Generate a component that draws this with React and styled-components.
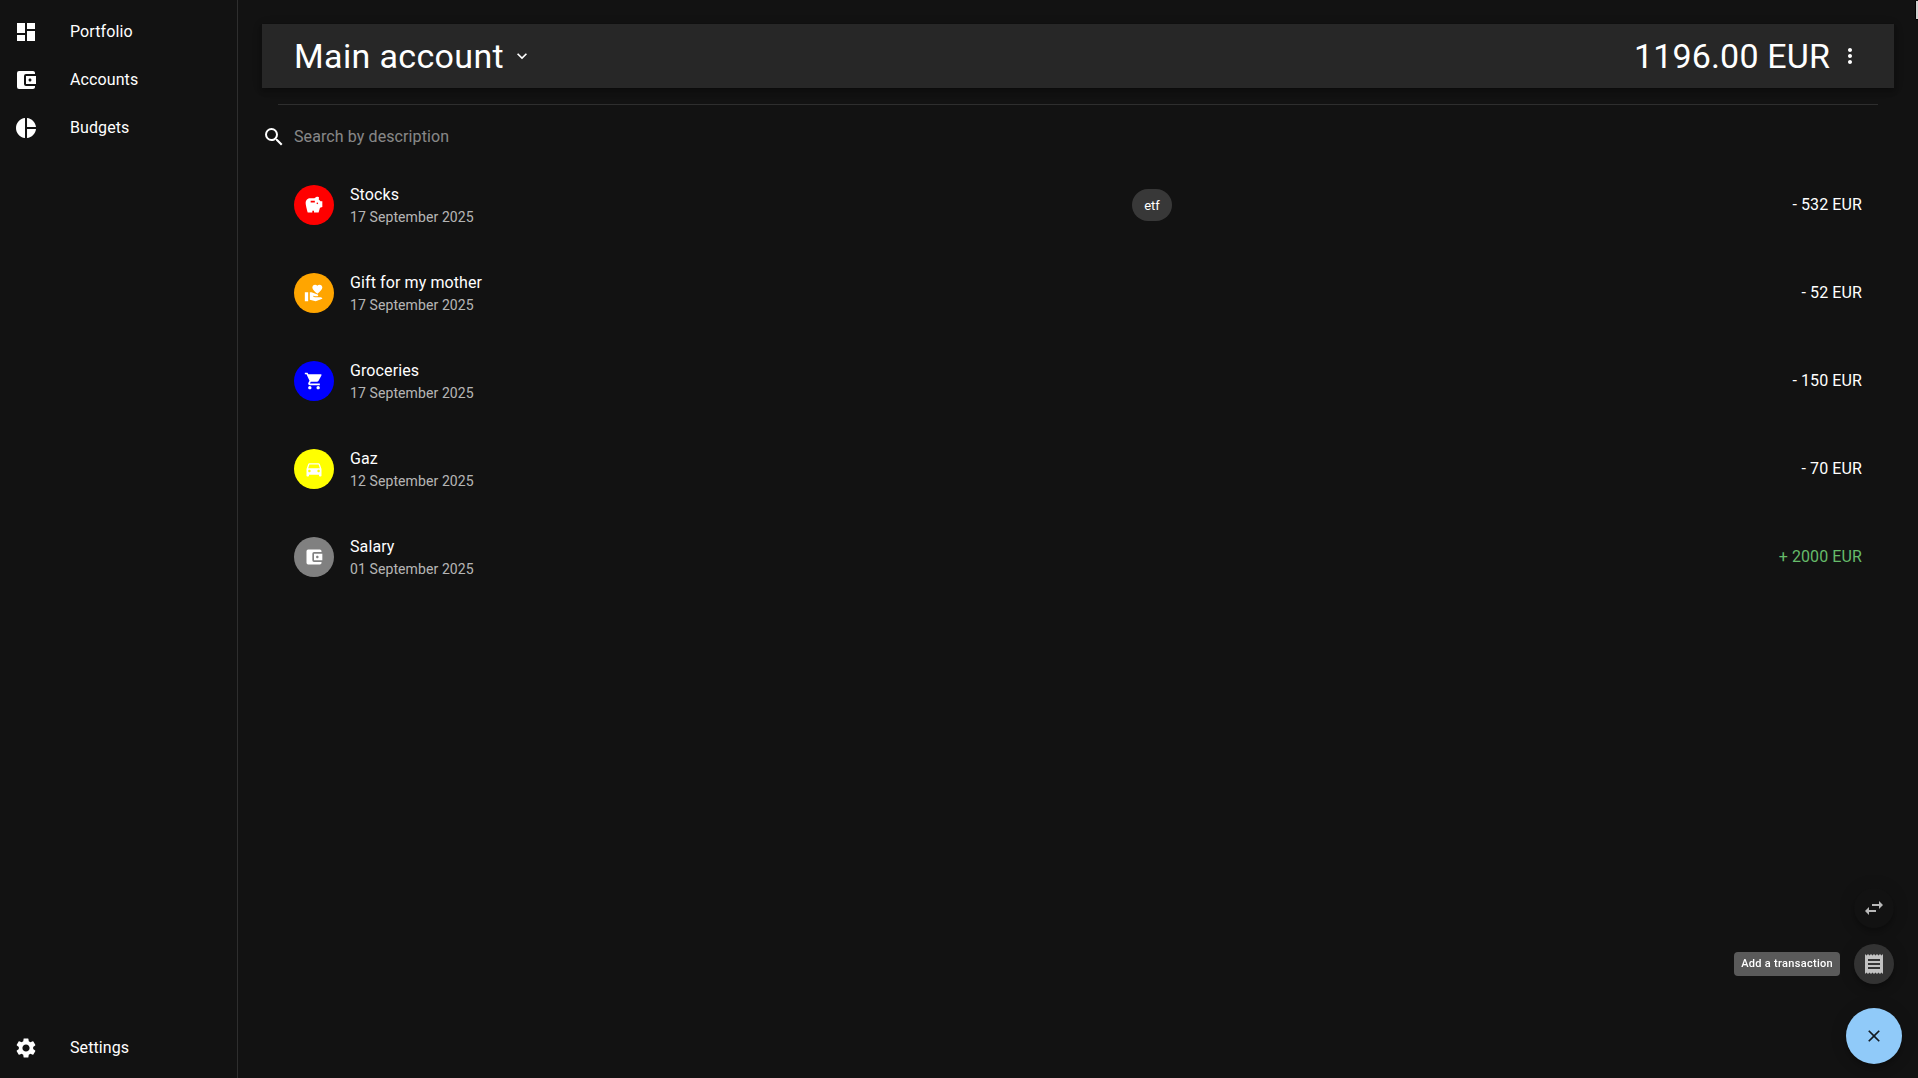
import React from 'react'
import styled, { createGlobalStyle } from 'styled-components'
import {
  MdDashboard,
  MdAccountBalanceWallet,
  MdPieChart,
  MdSettings,
  MdSearch,
  MdExpandMore,
  MdMoreVert,
  MdSavings,
  MdVolunteerActivism,
  MdShoppingCart,
  MdDirectionsCar,
  MdSwapHoriz,
  MdReceipt,
  MdClose
} from 'react-icons/md'

const GlobalStyle = createGlobalStyle`
  html, body, #root {
    margin: 0;
    height: 100%;
  }

  body {
    background: #121212;
    color: #fff;
    font-family: Roboto, "Liberation Sans", sans-serif;
    font-size: 16px;
    overflow: hidden;
  }
`

const Layout = styled.div`
  display: flex;
  height: 100%;
`

const Drawer = styled.nav`
  flex: 0 0 238px;
  box-sizing: border-box;
  display: flex;
  flex-direction: column;
  justify-content: space-between;
  padding: 8px 0 6px;
  border-right: 1px solid rgba(255, 255, 255, 0.12);
`

const NavItem = styled.a`
  display: flex;
  align-items: center;
  height: 48px;
  padding-left: 14px;
  color: #fff;
  font-size: 16px;
  line-height: 24px;
  letter-spacing: 0.1px;

  svg {
    flex: 0 0 auto;
    width: 24px;
    height: 24px;
    margin-right: 32px;
  }
`

const Main = styled.main`
  flex: 1 1 auto;
  min-width: 0;
  padding: 24px;
`

const AccountBar = styled.header`
  display: flex;
  align-items: center;
  justify-content: space-between;
  height: 64px;
  padding: 0 32px;
  background: #272727;
  box-shadow: 0 2px 4px -1px rgba(0, 0, 0, 0.2), 0 4px 5px 0 rgba(0, 0, 0, 0.14), 0 1px 10px 0 rgba(0, 0, 0, 0.12);
`

const AccountTitle = styled.div`
  display: flex;
  align-items: center;
  font-size: 34px;
  line-height: 42px;
  letter-spacing: 0.35px;

  svg {
    width: 20px;
    height: 20px;
    margin-left: 8px;
  }
`

const Balance = styled.div`
  display: flex;
  align-items: center;
  gap: 8px;
  font-size: 34px;
  line-height: 42px;
  letter-spacing: 0.15px;

  svg {
    width: 24px;
    height: 24px;
  }
`

const Divider = styled.hr`
  height: 1px;
  margin: 16px 16px 0;
  border: 0;
  background: rgba(255, 255, 255, 0.12);
`

const SearchRow = styled.label`
  display: flex;
  align-items: center;
  gap: 8px;
  height: 64px;

  svg {
    flex: 0 0 auto;
    width: 24px;
    height: 24px;
  }
`

const SearchInput = styled.input`
  flex: 1 1 auto;
  padding: 0 0 1px;
  border: 0;
  outline: 0;
  background: transparent;
  color: #fff;
  font: inherit;
  letter-spacing: 0.1px;

  &::placeholder {
    color: rgba(255, 255, 255, 0.5);
    opacity: 1;
  }
`

const List = styled.ul`
  margin: -8px 0 0;
  padding: 0 32px;
  list-style: none;
`

const Row = styled.li`
  display: flex;
  align-items: center;
  height: 88px;
`

const Avatar = styled.span`
  flex: 0 0 40px;
  display: flex;
  align-items: center;
  justify-content: center;
  width: 40px;
  height: 40px;
  margin-right: 16px;
  border-radius: 50%;
  background: ${p => p.$color};

  svg {
    width: 20px;
    height: 20px;
    color: #fff;
  }
`

const RowText = styled.div`
  flex: 0 0 782px;
`

const RowTitle = styled.div`
  font-size: 16px;
  line-height: 24px;
  letter-spacing: 0.1px;
`

const RowDate = styled.div`
  font-size: 14px;
  line-height: 20px;
  letter-spacing: 0.1px;
  color: rgba(255, 255, 255, 0.7);
`

const Tags = styled.div`
  flex: 1 1 auto;
`

const Chip = styled.span`
  display: inline-flex;
  align-items: center;
  justify-content: center;
  width: 40px;
  height: 32px;
  border-radius: 16px;
  background: rgba(255, 255, 255, 0.16);
  font-size: 13px;
`

const Amount = styled.div`
  margin-top: -2px;
  font-size: 16px;
  letter-spacing: 0.1px;
  color: ${p => (p.$positive ? '#66bb6a' : '#fff')};
`

const SpeedDial = styled.div`
  position: fixed;
  right: 16px;
  bottom: 14px;
  display: flex;
  flex-direction: column;
  align-items: center;
`

const SmallFab = styled.button`
  position: relative;
  display: flex;
  align-items: center;
  justify-content: center;
  width: 40px;
  height: 40px;
  margin-bottom: 16px;
  padding: 0;
  border: 0;
  border-radius: 50%;
  color: rgba(255, 255, 255, 0.7);
  background: ${p => (p.$active ? '#333333' : '#121212')};
  box-shadow: 0 3px 5px -1px rgba(0, 0, 0, 0.2), 0 6px 10px 0 rgba(0, 0, 0, 0.14), 0 1px 18px 0 rgba(0, 0, 0, 0.12);

  svg {
    width: 24px;
    height: 24px;
  }
`

const Tooltip = styled.span`
  position: absolute;
  right: 54px;
  top: 8px;
  padding: 4px 7px;
  border-radius: 4px;
  background: rgba(97, 97, 97, 0.92);
  color: #fff;
  font-family: Roboto, "Liberation Sans", sans-serif;
  font-size: 11px;
  font-weight: 500;
  line-height: 16px;
  letter-spacing: 0.3px;
  white-space: nowrap;
`

const MainFab = styled.button`
  display: flex;
  align-items: center;
  justify-content: center;
  width: 56px;
  height: 56px;
  margin-top: 8px;
  padding: 0;
  border: 0;
  border-radius: 50%;
  background: #90caf9;
  color: rgba(0, 0, 0, 0.87);
  box-shadow: 0 3px 5px -1px rgba(0, 0, 0, 0.2), 0 6px 10px 0 rgba(0, 0, 0, 0.14), 0 1px 18px 0 rgba(0, 0, 0, 0.12);

  svg {
    width: 20px;
    height: 20px;
  }
`

// sliver of something cut off by the window edge, top right
const EdgeSliver = styled.div`
  position: fixed;
  top: 1px;
  right: 0;
  width: 2px;
  height: 18px;
  background: #d0d0d0;
  box-shadow: -1px 0 0 #000, 0 1px 0 #000;
`

const transactions = [
  { id: 1, title: 'Stocks', date: '17 September 2025', amount: '- 532 EUR', color: '#ff0000', Icon: MdSavings, tag: 'etf' },
  { id: 2, title: 'Gift for my mother', date: '17 September 2025', amount: '- 52 EUR', color: '#ffa500', Icon: MdVolunteerActivism },
  { id: 3, title: 'Groceries', date: '17 September 2025', amount: '- 150 EUR', color: '#0000ff', Icon: MdShoppingCart },
  { id: 4, title: 'Gaz', date: '12 September 2025', amount: '- 70 EUR', color: '#ffff00', Icon: MdDirectionsCar },
  { id: 5, title: 'Salary', date: '01 September 2025', amount: '+ 2000 EUR', color: '#808080', Icon: MdAccountBalanceWallet, positive: true }
]

export default function App () {
  return (
    <Layout>
      <GlobalStyle />
      <Drawer>
        <div>
          <NavItem><MdDashboard />Portfolio</NavItem>
          <NavItem><MdAccountBalanceWallet />Accounts</NavItem>
          <NavItem><MdPieChart />Budgets</NavItem>
        </div>
        <NavItem><MdSettings />Settings</NavItem>
      </Drawer>
      <Main>
        <AccountBar>
          <AccountTitle>Main account<MdExpandMore /></AccountTitle>
          <Balance>1196.00 EUR<MdMoreVert /></Balance>
        </AccountBar>
        <Divider />
        <SearchRow>
          <MdSearch />
          <SearchInput placeholder="Search by description" />
        </SearchRow>
        <List>
          {transactions.map(({ id, title, date, amount, color, Icon, tag, positive }) => (
            <Row key={id}>
              <Avatar $color={color}><Icon /></Avatar>
              <RowText>
                <RowTitle>{title}</RowTitle>
                <RowDate>{date}</RowDate>
              </RowText>
              <Tags>{tag && <Chip>{tag}</Chip>}</Tags>
              <Amount $positive={positive}>{amount}</Amount>
            </Row>
          ))}
        </List>
      </Main>
      <SpeedDial>
        <SmallFab><MdSwapHoriz /></SmallFab>
        <SmallFab $active>
          <MdReceipt />
          <Tooltip>Add a transaction</Tooltip>
        </SmallFab>
        <MainFab><MdClose /></MainFab>
      </SpeedDial>
      <EdgeSliver />
    </Layout>
  )
}
